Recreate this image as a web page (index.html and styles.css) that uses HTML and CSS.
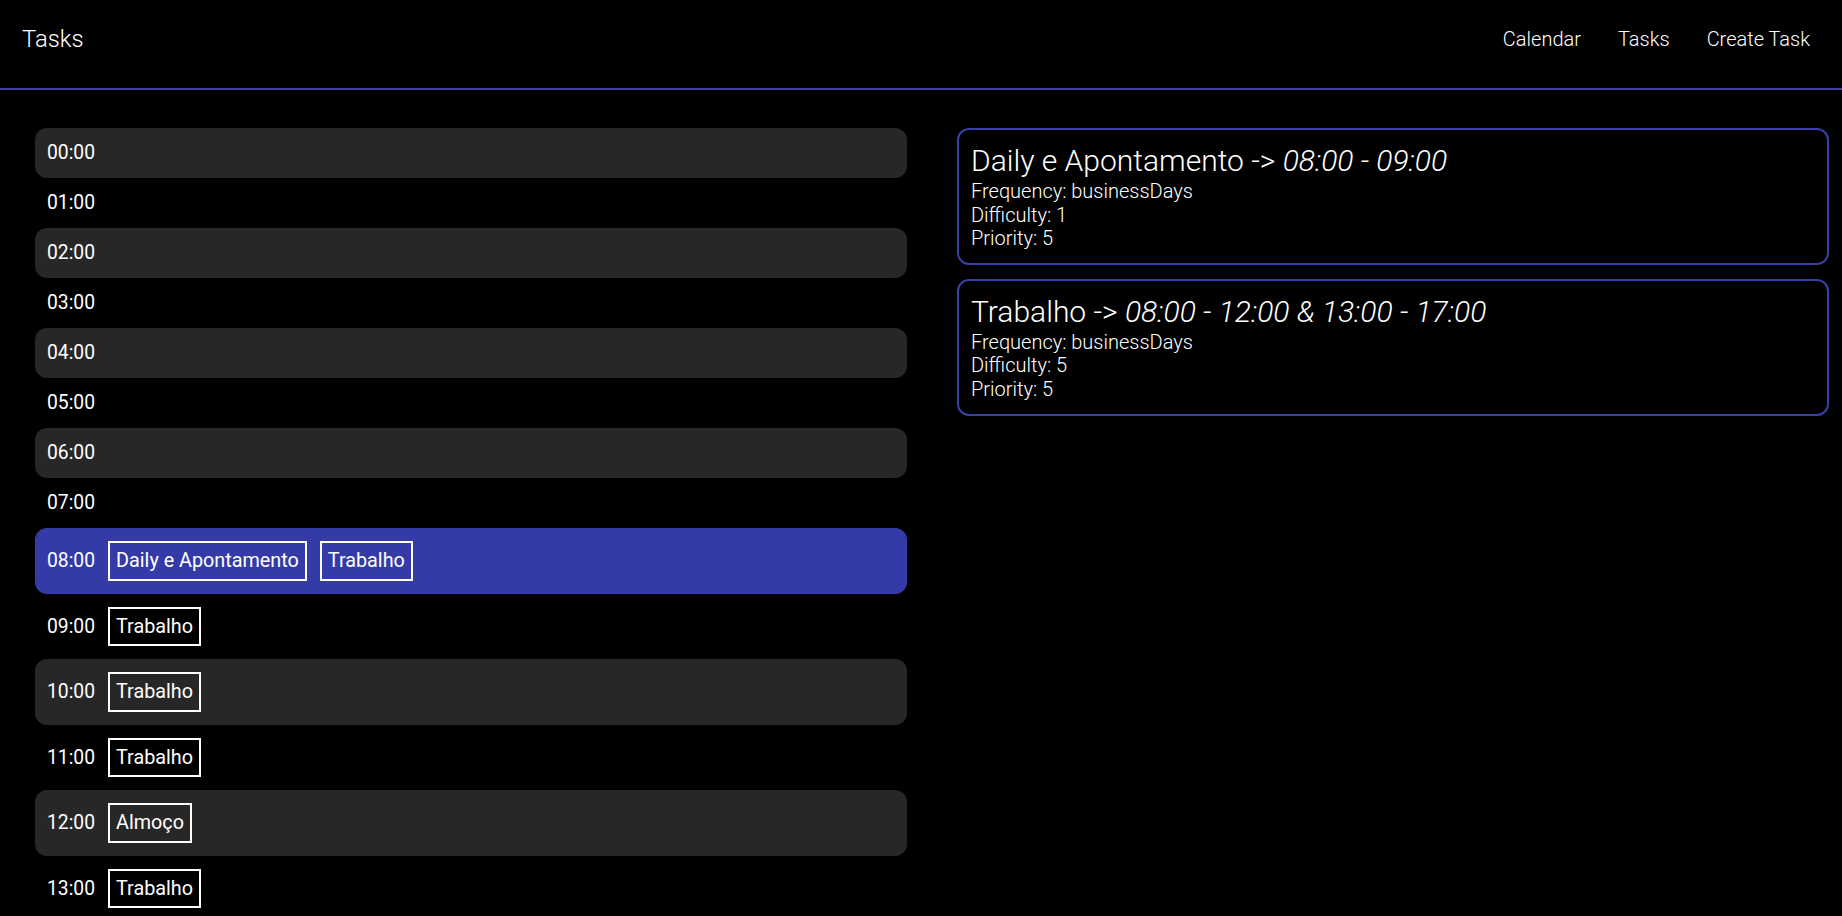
FILE: index.html
```html
<!DOCTYPE html>
<html lang="pt">
<head>
<meta charset="utf-8">
<title>Tasks</title>
<link rel="stylesheet" href="styles.css">
</head>
<body>
<header class="topbar">
  <div class="brand">Tasks</div>
  <nav class="nav">
    <a class="nav-link" href="#">Calendar</a>
    <a class="nav-link" href="#">Tasks</a>
    <a class="nav-link" href="#">Create Task</a>
  </nav>
</header>
<main class="layout">
  <section class="hours">
    <div class="hour alt"><span class="time">00:00</span></div>
    <div class="hour"><span class="time">01:00</span></div>
    <div class="hour alt"><span class="time">02:00</span></div>
    <div class="hour"><span class="time">03:00</span></div>
    <div class="hour alt"><span class="time">04:00</span></div>
    <div class="hour"><span class="time">05:00</span></div>
    <div class="hour alt"><span class="time">06:00</span></div>
    <div class="hour"><span class="time">07:00</span></div>
    <div class="hour current"><span class="time">08:00</span><span class="chip">Daily e Apontamento</span><span class="chip">Trabalho</span></div>
    <div class="hour"><span class="time">09:00</span><span class="chip">Trabalho</span></div>
    <div class="hour alt"><span class="time">10:00</span><span class="chip">Trabalho</span></div>
    <div class="hour"><span class="time">11:00</span><span class="chip">Trabalho</span></div>
    <div class="hour alt"><span class="time">12:00</span><span class="chip">Almoço</span></div>
    <div class="hour"><span class="time">13:00</span><span class="chip">Trabalho</span></div>
    <div class="hour alt"><span class="time">14:00</span><span class="chip">Trabalho</span></div>
    <div class="hour"><span class="time">15:00</span><span class="chip">Trabalho</span></div>
    <div class="hour alt"><span class="time">16:00</span><span class="chip">Trabalho</span></div>
    <div class="hour"><span class="time">17:00</span></div>
    <div class="hour alt"><span class="time">18:00</span></div>
    <div class="hour"><span class="time">19:00</span></div>
    <div class="hour alt"><span class="time">20:00</span></div>
    <div class="hour"><span class="time">21:00</span></div>
    <div class="hour alt"><span class="time">22:00</span></div>
    <div class="hour"><span class="time">23:00</span></div>
  </section>
  <section class="tasks">
    <article class="task-card">
      <h2 class="task-title">Daily e Apontamento -&gt; <em>08:00 - 09:00</em></h2>
      <p class="task-line">Frequency: businessDays</p>
      <p class="task-line">Difficulty: 1</p>
      <p class="task-line">Priority: 5</p>
    </article>
    <article class="task-card">
      <h2 class="task-title">Trabalho -&gt; <em>08:00 - 12:00 &amp; 13:00 - 17:00</em></h2>
      <p class="task-line">Frequency: businessDays</p>
      <p class="task-line">Difficulty: 5</p>
      <p class="task-line">Priority: 5</p>
    </article>
  </section>
</main>
</body>
</html>
```
FILE: styles.css
```css
html {
  scrollbar-width: none;
}
* {
  box-sizing: border-box;
}
body {
  margin: 0;
  background: #000;
  color: #fff;
  font-family: Roboto, "Liberation Sans", sans-serif;
}
.topbar {
  height: 90px;
  display: flex;
  align-items: flex-start;
  justify-content: space-between;
  padding: 25px 32px 0 22px;
  border-bottom: 2px solid #3b3fa6;
}
.brand {
  font-size: 23.8px;
  font-weight: 300;
  line-height: 28px;
}
.nav {
  display: flex;
  gap: 37px;
  padding-top: 3px;
}
.nav-link {
  color: #fff;
  text-decoration: none;
  font-size: 20px;
  font-weight: 300;
  line-height: 23.5px;
}
.layout {
  display: grid;
  grid-template-columns: 1fr 1fr;
  gap: 50px;
  padding: 38px 13px 0 35px;
  align-items: start;
}
.hours {
  display: flex;
  flex-direction: column;
}
.hour {
  display: flex;
  align-items: center;
  gap: 13px;
  min-height: 50px;
  padding: 13px 12px;
  border-radius: 12px;
  font-size: 19.3px;
  line-height: 23.5px;
}
.hour.alt {
  background: #272727;
}
.hour.current {
  background: #343ba9;
}
.time {
  flex: none;
}
.chip {
  border: 2px solid #fff;
  padding: 6px;
  font-size: 19.8px;
  line-height: 23.5px;
}
.tasks {
  display: flex;
  flex-direction: column;
  gap: 14px;
}
.task-card {
  border: 2px solid #3a3fa8;
  border-radius: 12px;
  padding: 12px 12px 12px;
}
.task-title {
  margin: 0;
  font-size: 30px;
  font-weight: 300;
  line-height: 38px;
}
.task-title em {
  font-style: italic;
}
.task-line {
  margin: 0;
  font-size: 20px;
  font-weight: 300;
  line-height: 23.6px;
}
```
